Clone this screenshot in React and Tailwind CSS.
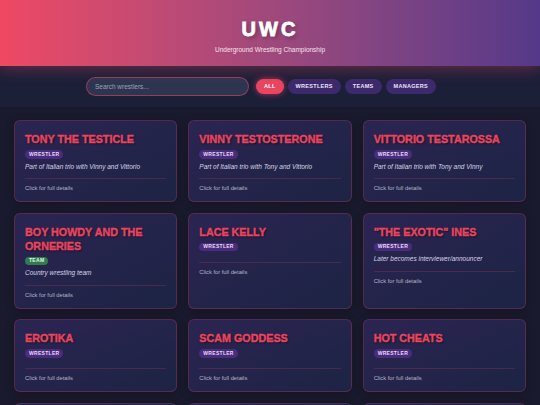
import React, { useState } from "react";

const roster = [
  { name: "Tony the Testicle", type: "wrestler", note: "Part of Italian trio with Vinny and Vittorio" },
  { name: "Vinny Testosterone", type: "wrestler", note: "Part of Italian trio with Tony and Vittorio" },
  { name: "Vittorio Testarossa", type: "wrestler", note: "Part of Italian trio with Tony and Vinny" },
  { name: "Boy Howdy and the Orneries", type: "team", note: "Country wrestling team" },
  { name: "Lace Kelly", type: "wrestler" },
  { name: "\"The Exotic\" Ines", type: "wrestler", note: "Later becomes interviewer/announcer" },
  { name: "Erotika", type: "wrestler" },
  { name: "Scam Goddess", type: "wrestler" },
  { name: "Hot Cheats", type: "wrestler" },
  { name: "Big Mama Bruiser", type: "wrestler" },
  { name: "The Landlords", type: "team" },
  { name: "Slick Sal", type: "manager" },
];

const filters = ["All", "Wrestlers", "Teams", "Managers"];

function Badge({ type }) {
  const styles = {
    wrestler: "bg-[#4a2c7c] text-[#e6daf7]",
    team: "bg-[#2f7d4c] text-[#e3f5ea]",
    manager: "bg-[#8a5a1c] text-[#fbeedc]",
  };
  return (
    <span
      className={
        "inline-flex h-[8.5px] items-center rounded-full px-[4px] text-[5px] font-bold uppercase tracking-[0.3px] " +
        styles[type]
      }
    >
      {type}
    </span>
  );
}

function Card({ item }) {
  return (
    <div className="flex flex-col rounded-[6px] border border-[#e94560]/25 bg-gradient-to-br from-[#2b2452] to-[#1c2444] px-[10px] pb-[9px] pt-[11px] shadow-[0_2px_8px_rgba(0,0,0,0.25)]">
      <h3 className="text-[10.75px] font-black uppercase leading-[14px] text-[#e94560] [-webkit-text-stroke:0.4px_#e94560] [text-shadow:1px_1px_2px_rgba(0,0,0,0.6)]">
        {item.name}
      </h3>
      <div className="mb-[3px] mt-[4px] flex">
        <Badge type={item.type} />
      </div>
      {item.note && (
        <p className="text-[6.5px] italic leading-[9px] text-[#d4d4e4]">{item.note}</p>
      )}
      <div className="mt-[7.5px] border-t border-[#e94560]/20 pt-[5px]">
        <p className="text-[5.75px] leading-[8px] text-[#b4b4c8]">Click for full details</p>
      </div>
    </div>
  );
}

export default function App() {
  const [active, setActive] = useState("All");

  return (
    <div className="min-h-screen bg-[#1a1a2e] font-['Liberation_Sans',Arial,sans-serif]">
      <header className="relative z-10 bg-gradient-to-r from-[#ef4864] to-[#553889] pb-[12.5px] pt-[16.5px] text-center shadow-[0_3px_14px_rgba(233,69,96,0.35)]">
        <h1 className="text-[20px] font-black leading-[24px] tracking-[3px] text-white [-webkit-text-stroke:0.8px_white] [text-shadow:2px_2px_4px_rgba(0,0,0,0.35)]">
          UWC
        </h1>
        <p className="mt-[4px] text-[6.5px] leading-[9px] text-white/85">
          Underground Wrestling Championship
        </p>
      </header>

      <div className="flex items-center justify-center gap-[7px] bg-[#1c1f38] py-[11px] pr-[18px]">
        <input
          type="text"
          placeholder="Search wrestlers..."
          className="h-[19px] w-[163px] rounded-full border border-[#e94560]/55 bg-[#2e3550] px-[8px] text-[6.5px] text-white outline-none placeholder:text-[#9ca2b8]"
        />
        <div className="flex gap-[4px]">
          {filters.map((f) => (
            <button
              key={f}
              onClick={() => setActive(f)}
              className={
                f === active
                  ? "h-[15px] rounded-full bg-[#e94560] px-[8px] text-[5.5px] font-bold uppercase tracking-[0.3px] text-white shadow-[0_0_6px_rgba(233,69,96,0.7)]"
                  : "h-[15px] rounded-full bg-[#3c2a6c] px-[8px] text-[5.5px] font-bold uppercase tracking-[0.3px] text-[#ece4fa]"
              }
            >
              {f}
            </button>
          ))}
        </div>
      </div>

      <main className="grid grid-cols-3 gap-x-[11px] gap-y-[10.5px] px-[14px] pb-[14px] pt-[13px]">
        {roster.map((item) => (
          <Card key={item.name} item={item} />
        ))}
      </main>
    </div>
  );
}
